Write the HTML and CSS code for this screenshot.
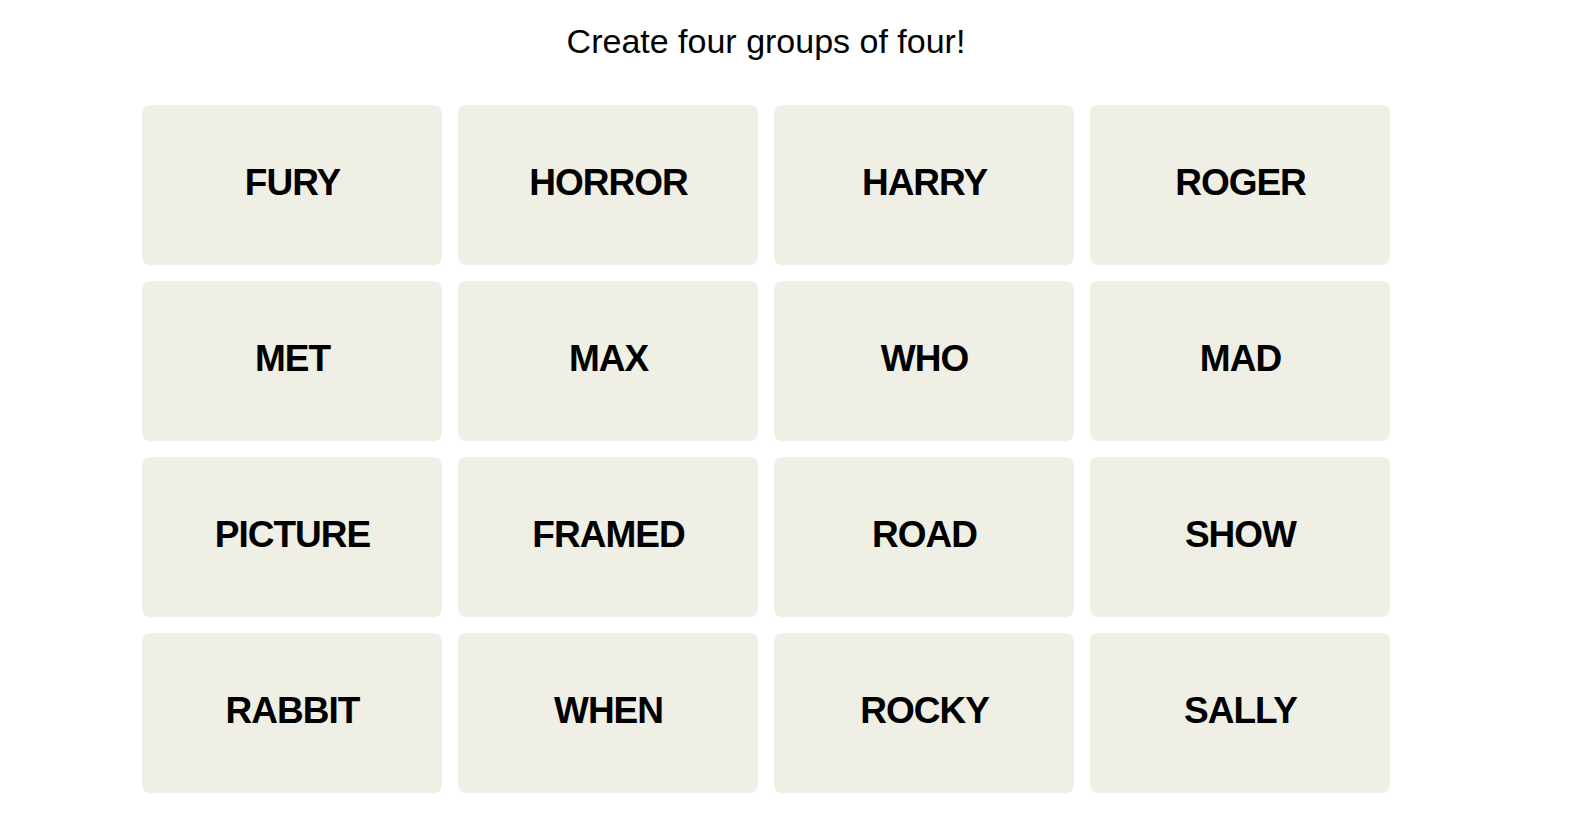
FILE: index.html
```html
<!DOCTYPE html>
<html>
<head>
    <title>Connections</title>
    <link rel="stylesheet" href="styles.css">
</head>
<body>
    <div class="game">
        <p class="prompt">Create four groups of four!</p>
        <div class="board">
            <button class="tile">FURY</button>
            <button class="tile">HORROR</button>
            <button class="tile">HARRY</button>
            <button class="tile">ROGER</button>

            <button class="tile">MET</button>
            <button class="tile">MAX</button>
            <button class="tile">WHO</button>
            <button class="tile">MAD</button>

            <button class="tile">PICTURE</button>
            <button class="tile">FRAMED</button>
            <button class="tile">ROAD</button>
            <button class="tile">SHOW</button>

            <button class="tile">RABBIT</button>
            <button class="tile">WHEN</button>
            <button class="tile">ROCKY</button>
            <button class="tile">SALLY</button>
        </div>
    </div>
</body>
</html>
```

FILE: styles.css
```css
body {
    margin: 0;
    background-color: #fff;
    font-family: "Liberation Sans", Arial, sans-serif;
    color: #000;
}

.game {
    width: 1248px;
    margin-left: 142px;
}

.prompt {
    margin: 0;
    padding-top: 21px;
    height: 105px;
    box-sizing: border-box;
    text-align: center;
    font-size: 34px;
    line-height: 40px;
}

.board {
    display: grid;
    grid-template-columns: repeat(4, 300px);
    grid-auto-rows: 160px;
    gap: 16px;
}

.tile {
    background-color: #efefe6;
    border: none;
    border-radius: 8px;
    font-family: "Liberation Sans", Arial, sans-serif;
    font-weight: bold;
    font-size: 37px;
    letter-spacing: -1px;
    color: #000;
    padding: 0 0 5px 1px;
    cursor: pointer;
}
```
